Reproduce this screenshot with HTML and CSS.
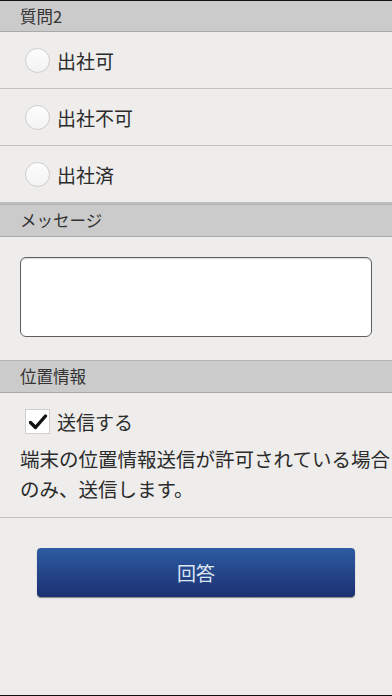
FILE: index.html
```html
<!DOCTYPE html>
<html lang="ja">
<head>
<meta charset="utf-8">
<link rel="stylesheet" href="styles.css">
</head>
<body>
<div class="page">
  <div class="sec-head first">質問2</div>
  <div class="opt"><span class="radio"></span><span class="opt-label">出社可</span></div>
  <div class="opt"><span class="radio"></span><span class="opt-label">出社不可</span></div>
  <div class="opt"><span class="radio"></span><span class="opt-label">出社済</span></div>
  <div class="sec-head">メッセージ</div>
  <div class="msg-wrap"><div class="textarea"></div></div>
  <div class="sec-head">位置情報</div>
  <div class="loc">
    <div class="check-row">
      <span class="checkbox"><svg width="20" height="18" viewBox="0 0 20 18"><path d="M2.5 9.5 L7.5 14.5 L17.5 3" fill="none" stroke="#111" stroke-width="3.4" stroke-linecap="round" stroke-linejoin="round"/></svg></span>
      <span class="check-label">送信する</span>
    </div>
    <p class="note">端末の位置情報送信が許可されている場合<br>のみ、送信します。</p>
  </div>
  <div class="btn-wrap"><div class="btn">回答</div></div>
</div>
</body>
</html>
```
FILE: styles.css
```css
html, body {
  margin: 0;
  padding: 0;
}
body {
  background: #eeedeb;
  font-family: "Noto Sans CJK JP", "Noto Sans", sans-serif;
  color: #2b2b2b;
  width: 392px;
  height: 696px;
  overflow: hidden;
}
.page {
  border-top: 1px solid #111;
  border-bottom: 1px solid #111;
  height: 694px;
  box-sizing: content-box;
}
.sec-head {
  height: 31px;
  line-height: 31px;
  background: #cbcbcb;
  border-bottom: 1px solid #a9a9a9;
  padding-left: 20px;
  font-size: 16.5px;
  color: #333;
}
.sec-head.first {
  height: 30px;
  line-height: 30px;
}
.opt + .sec-head {
  border-top: 2px solid #b8b8b8;
}
.opt {
  height: 56px;
  display: flex;
  align-items: center;
  padding-left: 25px;
  gap: 7px;
  border-bottom: 1px solid #c2c2c2;
}
.radio {
  width: 23px;
  height: 23px;
  border-radius: 50%;
  border: 1px solid #cdcdcd;
  background: linear-gradient(#fdfdfd, #f3f3f3);
  box-sizing: content-box;
}
.opt-label {
  font-size: 19px;
  color: #2b2b2b;
}
.msg-wrap {
  padding: 20px 20px 23px;
  border-bottom: 1px solid #b5b5b5;
}
.textarea {
  height: 78px;
  border: 1px solid #5f5f5f;
  border-radius: 6px;
  background: #fff;
  box-shadow: inset 0 1px 1px rgba(0,0,0,0.15);
}
.loc {
  padding: 16px 0 13px 20px;
  border-bottom: 1px solid #c2c2c2;
}
.check-row {
  display: flex;
  align-items: center;
  gap: 7px;
  padding-left: 5px;
  height: 25px;
}
.checkbox {
  width: 23px;
  height: 23px;
  border: 1px solid #cfcfcf;
  background: #fff;
  display: flex;
  align-items: center;
  justify-content: center;
  box-sizing: content-box;
}
.check-label {
  font-size: 19px;
}
.note {
  margin: 10px 0 0;
  font-size: 19.5px;
  line-height: 30px;
  white-space: nowrap;
  color: #2b2b2b;
}
.btn-wrap {
  padding: 30px 37px 0;
}
.btn {
  height: 49px;
  line-height: 49px;
  border-radius: 4px;
  background: linear-gradient(#2e5ba2, #1b3171);
  box-shadow: 0 1px 1px rgba(0,0,0,0.45);
  text-align: center;
  color: #dfe5f1;
  font-size: 19px;
}
```
